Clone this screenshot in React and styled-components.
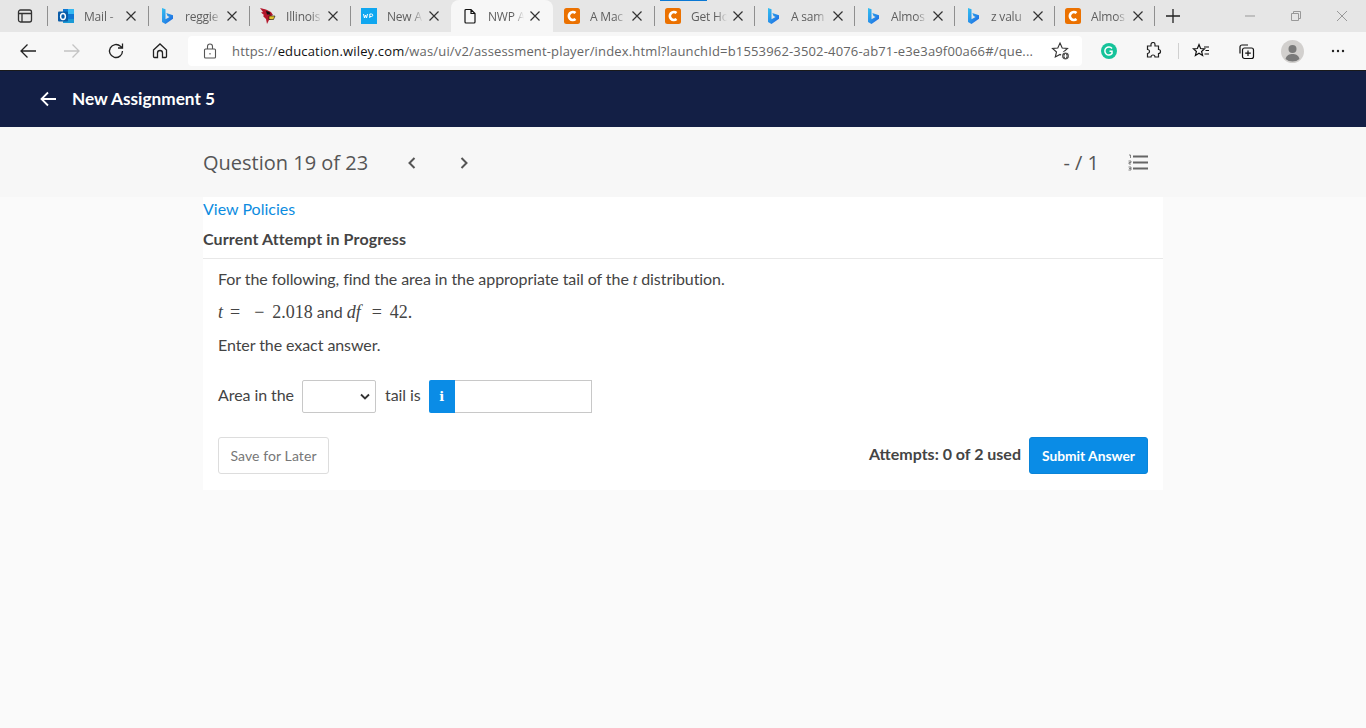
import styled, { createGlobalStyle } from "styled-components";

const Global = createGlobalStyle`
  * { box-sizing: border-box; }
  html, body { margin: 0; padding: 0; background: #fafafa; }
  body { font-family: "Lato", "Liberation Sans", sans-serif; color: #333; }
`;

const Page = styled.div`
  width: 1366px;
  height: 728px;
  overflow: hidden;
  display: flex;
  flex-direction: column;
  background: #fafafa;
`;

/* browser chrome */
const TabBar = styled.div`
  height: 32px;
  background: #e6e6e6;
  display: flex;
  align-items: stretch;
  flex-shrink: 0;
`;
const WindowBtn = styled.div`
  width: 47px;
  display: flex;
  align-items: center;
  justify-content: center;
  padding-left: 3px;
`;
const Tab = styled.div`
  position: relative;
  width: ${(p) => p.$w || 101}px;
  display: flex;
  align-items: center;
  padding-left: 11px;
  background: ${(p) => (p.$active ? "#f7f7f7" : "transparent")};
  border-radius: ${(p) => (p.$active ? "8px 8px 0 0" : "0")};
  &::before {
    content: "";
    display: ${(p) => (p.$bar ? "block" : "none")};
    position: absolute;
    left: 6px;
    top: 0;
    width: 47px;
    height: 1px;
    background: #0a78d4;
  }
  &::after {
    content: "";
    display: ${(p) => (p.$sep ? "block" : "none")};
    position: absolute;
    left: 0;
    top: 6px;
    width: 1px;
    height: 20px;
    background: #8f8f8f;
  }
`;
const TabIcon = styled.span`
  width: 16px;
  height: 16px;
  display: flex;
  flex-shrink: 0;
`;
const TabTitle = styled.span`
  margin-left: 10px;
  width: 36px;
  white-space: nowrap;
  font: 12px "Open Sans", "Liberation Sans", sans-serif;
  letter-spacing: -0.2px;
  color: #5f5f5f;
  -webkit-mask-image: linear-gradient(to right, #000 70%, transparent 100%);
  mask-image: linear-gradient(to right, #000 70%, transparent 100%);
`;
const TabClose = styled.svg`
  margin-left: 3px;
  flex-shrink: 0;
`;
const NewTab = styled.div`
  position: relative;
  width: 37px;
  display: flex;
  align-items: center;
  justify-content: center;
  &::after {
    content: "";
    position: absolute;
    left: 0;
    top: 6px;
    width: 1px;
    height: 20px;
    background: #8f8f8f;
  }
`;
const WindowControls = styled.div`
  margin-left: auto;
  display: flex;
  align-items: center;
  padding-right: 1px;
`;
const WinCtl = styled.div`
  width: 46px;
  height: 30px;
  display: flex;
  align-items: center;
  justify-content: center;
`;

const Toolbar = styled.div`
  height: 39px;
  background: #f7f7f7;
  border-bottom: 1px solid #1a1a1a;
  display: flex;
  align-items: center;
  flex-shrink: 0;
`;
const NavBtn = styled.div`
  width: ${(p) => p.$w || 44}px;
  padding-left: ${(p) => p.$pl || 0}px;
  display: flex;
  align-items: center;
  justify-content: center;
  flex-shrink: 0;
`;
const UrlBox = styled.div`
  width: 894px;
  height: 30px;
  margin-left: 6px;
  background: #fff;
  border-radius: 4px;
  display: flex;
  align-items: center;
  padding-left: 15px;
  flex-shrink: 0;
`;
const Url = styled.span`
  margin-left: 15px;
  width: 806px;
  white-space: nowrap;
  font: 13px "Open Sans", "Liberation Sans", sans-serif;
  letter-spacing: 0.16px;
  color: #666;
  b { font-weight: 400; color: #111; }
`;
const StarSlot = styled.span`
  margin-left: 13px;
  display: flex;
`;
const ToolDivider = styled.span`
  width: 1px;
  height: 16px;
  background: #d0d0d0;
  flex-shrink: 0;
`;

/* assignment header */
const Header = styled.div`
  height: 56px;
  background: #131f45;
  display: flex;
  align-items: center;
  padding-left: 40px;
  padding-bottom: 1px;
  gap: 16px;
  flex-shrink: 0;
`;
const HeaderTitle = styled.h1`
  margin: 0;
  font-size: 17.2px;
  font-weight: 700;
  color: #fff;
`;

const QuestionBar = styled.div`
  height: 70px;
  background: #f7f7f7;
  padding: 0 203px;
  display: flex;
  align-items: center;
  flex-shrink: 0;
`;
const QuestionTitle = styled.div`
  width: 165px;
  font: 20px "Open Sans", "Liberation Sans", sans-serif;
  color: #555;
  white-space: nowrap;
`;
const Chevrons = styled.div`
  margin-left: 39px;
  padding-top: 2px;
  display: flex;
  gap: 42px;
`;
const Score = styled.div`
  margin-left: auto;
  font: 20px "Open Sans", "Liberation Sans", sans-serif;
  color: #555;
`;
const ListBtn = styled.div`
  margin-left: 29px;
  margin-right: 15px;
  display: flex;
`;

const Card = styled.main`
  width: 960px;
  height: 293px;
  margin-left: 203px;
  background: #fff;
  display: flex;
  flex-direction: column;
`;
const PolicyLink = styled.a`
  margin-top: 2px;
  font-size: 16px;
  line-height: 19px;
  color: #0d8ce0;
`;
const AttemptLabel = styled.div`
  margin-top: 11px;
  padding-bottom: 10px;
  font-size: 16px;
  letter-spacing: 0.13px;
  line-height: 19px;
  font-weight: 700;
  color: #444;
  border-bottom: 1px solid #e8e8e8;
`;
const Body = styled.div`
  padding: 10px 15px 0;
  display: flex;
  flex-direction: column;
  font-size: 16px;
  color: #444;
`;
const Para = styled.p`
  margin: 0 0 ${(p) => p.$gap || 0}px;
  line-height: 19px;
  letter-spacing: -0.07px;
  i { font-family: "Liberation Serif", serif; }
`;
const MathLine = styled.p`
  margin: 0 0 13px;
  line-height: 19px;
  font-size: 16px;
  white-space: nowrap;
  display: flex;
  align-items: baseline;
`;
const MathText = styled.span`
  font-family: "Liberation Serif", serif;
  font-size: 18px;
  margin-left: ${(p) => p.$ml || 0}px;
  font-style: ${(p) => (p.$it ? "italic" : "normal")};
`;
const AndWord = styled.span`
  margin: 0 4px;
`;
const AnswerRow = styled.div`
  margin-top: 26px;
  height: 33px;
  display: flex;
  align-items: center;
`;
const AnswerLabel = styled.span`
  padding-bottom: 5px;
  letter-spacing: -0.07px;
`;
const FakeSelect = styled.div`
  width: 74px;
  height: 33px;
  margin: 0 9px 0 8px;
  background: #fff;
  border: 1px solid #c8c8c8;
  border-radius: 2px;
  display: flex;
  align-items: center;
  justify-content: flex-end;
  padding-right: 5px;
`;
const InfoBtn = styled.div`
  width: 26px;
  height: 33px;
  margin-left: 8px;
  background: #0a8ce6;
  border-radius: 2px 0 0 2px;
  color: #fff;
  font: 700 13px "DejaVu Serif", serif;
  display: flex;
  align-items: center;
  justify-content: center;
`;
const AnswerInput = styled.div`
  width: 137px;
  height: 33px;
  background: #fff;
  border: 1px solid #c8c8c8;
  border-left: none;
`;
const Actions = styled.div`
  margin-top: 24px;
  display: flex;
  align-items: flex-start;
`;
const SaveBtn = styled.button`
  width: 111px;
  height: 37px;
  background: #fff;
  border: 1px solid #ddd;
  border-radius: 3px;
  font: 14px "Lato", sans-serif;
  letter-spacing: 0.1px;
  color: #777;
`;
const Attempts = styled.div`
  margin-left: auto;
  margin-right: 8px;
  margin-top: 7px;
  font-size: 16px;
  font-weight: 700;
  line-height: 20px;
  color: #444;
`;
const SubmitBtn = styled.button`
  width: 119px;
  height: 37px;
  background: #0a8ce6;
  border: 1px solid #0a84d8;
  border-radius: 3px;
  font: 700 13.8px "Lato", sans-serif;
  color: #fff;
`;

const Close = () => (
  <TabClose width="16" height="16" viewBox="0 0 16 16" fill="none" stroke="#333" strokeWidth="1.2">
    <path d="M3.5 3.5l9 9M12.5 3.5l-9 9" />
  </TabClose>
);

const Outlook = () => (
  <svg width="16" height="16" viewBox="0 0 16 16">
    <rect x="5" y="1" width="11" height="14" fill="#1a9ad6" />
    <rect x="10" y="1" width="6" height="5" fill="#35b8f1" />
    <rect x="5" y="1" width="5" height="5" fill="#0f78d4" />
    <rect x="10" y="6" width="6" height="5" fill="#0f78d4" />
    <rect x="0" y="3.5" width="10" height="10" rx="1" fill="#0a5ca8" />
    <ellipse cx="5" cy="8.5" rx="2.4" ry="3" fill="none" stroke="#fff" strokeWidth="1.4" />
  </svg>
);

const Bing = () => (
  <svg width="16" height="16" viewBox="0 0 16 16">
    <defs>
      <linearGradient id="bingGrad" x1="0" y1="0" x2="1" y2="1">
        <stop offset="0" stopColor="#35c1f1" />
        <stop offset="1" stopColor="#1b62e0" />
      </linearGradient>
    </defs>
    <path d="M3 0l3.500 1.200v10l4-2.300-2-1-1.200-3 6.700 2.300v3.600L6.500 16 3 14z" fill="url(#bingGrad)" />
  </svg>
);

const Cardinal = () => (
  <svg width="16" height="16" viewBox="0 0 16 16">
    <path d="M0 0l6 1.500 5 2.500 2 3-2 1 1 3-3 1-2 4-1-5-3-3 1-1-3-2.500 2-.5z" fill="#b3162b" />
    <path d="M6 3l3.500 1 1 2.500-3.500 0z" fill="#111" />
    <path d="M9 8l6 0-1.500 3.500-4.500 0z" fill="#e3c22b" stroke="#111" strokeWidth=".6" />
  </svg>
);

const Wp = () => (
  <svg width="16" height="16" viewBox="0 0 16 16">
    <rect width="16" height="16" fill="#10a7f0" />
    <path d="M2.500 6l1 4 1-3 1 3 1-4M8.800 10V6h1.700a1.200 1.200 0 010 2.500H8.800" fill="none" stroke="#fff" strokeWidth="1" />
  </svg>
);

const Doc = () => (
  <svg width="16" height="16" viewBox="0 0 16 16" fill="none" stroke="#111" strokeWidth="1.2">
    <path d="M3 2.500a1 1 0 011-1h5l4 4v8.500a1 1 0 01-1 1H4a1 1 0 01-1-1zM9 1.500v4h4" />
  </svg>
);

const Chegg = () => (
  <svg width="16" height="16" viewBox="0 0 16 16">
    <rect width="16" height="16" rx="2.500" fill="#eb7100" />
    <path d="M11.500 5a4 4 0 100 6" fill="none" stroke="#fff" strokeWidth="2.600" />
  </svg>
);

const tabs = [
  { icon: <Outlook />, title: "Mail -", sep: true },
  { icon: <Bing />, title: "reggie", sep: true },
  { icon: <Cardinal />, title: "Illinois", sep: true },
  { icon: <Wp />, title: "New A", sep: true },
  { icon: <Doc />, title: "NWP A", active: true, w: 102 },
  { icon: <Chegg />, title: "A Mac", w: 101 },
  { icon: <Chegg />, title: "Get Ho", sep: true, w: 100, bar: true },
  { icon: <Bing />, title: "A sam", sep: true, w: 100 },
  { icon: <Bing />, title: "Almos", sep: true, w: 100 },
  { icon: <Bing />, title: "z valu", sep: true, w: 100 },
  { icon: <Chegg />, title: "Almos", sep: true, w: 100 },
];

const Stroke = ({ w = 20, h = 20, vb, color = "#222", sw = 1.400, children }) => (
  <svg width={w} height={h} viewBox={vb || `0 0 ${w} ${h}`} fill="none" stroke={color} strokeWidth={sw}>
    {children}
  </svg>
);

export default function App() {
  return (
    <Page>
      <Global />
      <TabBar>
        <WindowBtn>
          <Stroke w={16} h={16} sw={1.300} color="#333">
            <rect x="1.500" y="2" width="13" height="12" rx="2" />
            <path d="M1.500 5.500h13M5 5.500V14" />
          </Stroke>
        </WindowBtn>
        {tabs.map((t, i) => (
          <Tab key={i} $sep={t.sep} $active={t.active} $w={t.w} $bar={t.bar}>
            <TabIcon>{t.icon}</TabIcon>
            <TabTitle>{t.title}</TabTitle>
            <Close />
          </Tab>
        ))}
        <NewTab>
          <Stroke w={16} h={16} sw={1.300} color="#222">
            <path d="M8 1v14M1 8h14" />
          </Stroke>
        </NewTab>
        <WindowControls>
          <WinCtl>
            <Stroke w={12} h={12} sw={1} color="#999"><path d="M1 6h10" /></Stroke>
          </WinCtl>
          <WinCtl>
            <Stroke w={12} h={12} sw={1} color="#999">
              <path d="M1.500 3.500h7v7h-7zM3.500 3.500v-2h7v7h-2" />
            </Stroke>
          </WinCtl>
          <WinCtl>
            <Stroke w={12} h={12} sw={1} color="#999"><path d="M1 1l10 10M11 1L1 11" /></Stroke>
          </WinCtl>
        </WindowControls>
      </TabBar>

      <Toolbar>
        <NavBtn $w={50} $pl={6}>
          <Stroke sw={1.300}><path d="M18 10H3M9.500 3.500L3 10l6.500 6.500" /></Stroke>
        </NavBtn>
        <NavBtn>
          <Stroke color="#c4c4c4" sw={1.300}><path d="M2 10h15M10.500 3.500L17 10l-6.500 6.500" /></Stroke>
        </NavBtn>
        <NavBtn>
          <Stroke sw={1.300}><path d="M16.500 10a6.500 6.500 0 11-2-4.700L16.500 7M16.500 2.500V7H12" /></Stroke>
        </NavBtn>
        <NavBtn>
          <Stroke sw={1.300}>
            <path d="M3.500 9L10 3l6.500 6v6.500a1 1 0 01-1 1h-3V12a2.500 2.500 0 00-5 0v4.500h-3a1 1 0 01-1-1z" />
          </Stroke>
        </NavBtn>
        <UrlBox>
          <Stroke w={14} h={16} sw={1.100} color="#555">
            <rect x="1.500" y="6" width="11" height="9" rx="1" />
            <path d="M4.500 6V3.500a2.500 2.500 0 015 0V6M7 10v1.500" />
          </Stroke>
          <Url>
            https://<b>education.wiley.com</b>/was/ui/v2/assessment-player/index.html?launchId=b1553962-3502-4076-ab71-e3e3a9f00a66#/que...
          </Url>
          <StarSlot>
            <svg width="20" height="20" viewBox="0 0 20 20" fill="none" stroke="#333" strokeWidth="1.100">
              <path d="M9 2l2.200 5 5.300.5-4 3.500 1.200 5L9 13.400 4.300 16l1.200-5-4-3.500L6.800 7z" />
              <circle cx="14.500" cy="15" r="4" fill="#555" stroke="#fff" />
              <path d="M14.500 13v4M12.500 15h4" stroke="#fff" strokeWidth="1" />
            </svg>
          </StarSlot>
        </UrlBox>
        <NavBtn $w={54}>
          <svg width="16" height="16" viewBox="0 0 16 16">
            <circle cx="8" cy="8" r="8" fill="#15c39a" />
            <path d="M11 5.500a4 4 0 100 5V8.300H8.500" fill="none" stroke="#fff" strokeWidth="1.500" />
          </svg>
        </NavBtn>
        <NavBtn $w={34}>
          <Stroke w={18} h={18} sw={1.200}>
            <path d="M7 2.500a2 2 0 014 0V4h3.500v3.500a2 2 0 010 4V15H11a2 2 0 00-4 0H3.500v-3.500a2 2 0 000-4V4H7z" />
          </Stroke>
        </NavBtn>
        <NavBtn $w={16}><ToolDivider /></NavBtn>
        <NavBtn $w={30}>
          <Stroke w={18} h={18} sw={1.200} color="#111">
            <path d="M7 2.500l1.600 4 4 .3-3 2.700 1 4L7 11.300 3.400 13.500l1-4-3-2.700 4-.3zM12 5h5M13.500 8.500H17M12.500 12H17" />
          </Stroke>
        </NavBtn>
        <NavBtn $w={60}>
          <Stroke w={18} h={18} sw={1.200} color="#111">
            <path d="M3 11.500V5a2 2 0 012-2h6" />
            <rect x="5.500" y="6" width="11" height="10.500" rx="2" />
            <path d="M11 8.500v5.500M8.200 11.200h5.600" />
          </Stroke>
        </NavBtn>
        <NavBtn $w={32}>
          <svg width="23" height="23" viewBox="0 0 23 23">
            <circle cx="11.500" cy="11.500" r="11.500" fill="#d2d0ce" />
            <circle cx="11.500" cy="9" r="4" fill="#7a7a7a" />
            <path d="M4.500 19c1-4 4-5 7-5s6 1 7 5a11 11 0 01-14 0z" fill="#7a7a7a" />
          </svg>
        </NavBtn>
        <NavBtn $w={60}>
          <svg width="14" height="4" viewBox="0 0 14 4" fill="#222">
            <circle cx="2" cy="2" r="1.200" />
            <circle cx="7" cy="2" r="1.200" />
            <circle cx="12" cy="2" r="1.200" />
          </svg>
        </NavBtn>
      </Toolbar>

      <Header>
        <Stroke w={16} h={16} color="#fff" sw={1.800}>
          <path d="M16 8H1.500M8 1.500L1.500 8 8 14.500" />
        </Stroke>
        <HeaderTitle>New Assignment 5</HeaderTitle>
      </Header>

      <QuestionBar>
        <QuestionTitle>Question 19 of 23</QuestionTitle>
        <Chevrons>
          <Stroke w={10} h={14} color="#555" sw={2}><path d="M7.500 2L2.500 7l5 5" /></Stroke>
          <Stroke w={10} h={14} color="#555" sw={2}><path d="M2.500 2l5 5-5 5" /></Stroke>
        </Chevrons>
        <Score>- / 1</Score>
        <ListBtn>
          <svg width="20" height="17" viewBox="0 0 20 17">
            <path d="M5 2.500h15M5 8.500h15M5 14.500h15" stroke="#666" strokeWidth="2" />
            <path d="M1 1h1.500v3M0.500 7h2.500v1.500H1V10h2M0.500 13h2.500v3H.5M1 14.500h2" stroke="#666" strokeWidth=".8" fill="none" />
          </svg>
        </ListBtn>
      </QuestionBar>

      <Card>
        <PolicyLink>View Policies</PolicyLink>
        <AttemptLabel>Current Attempt in Progress</AttemptLabel>
        <Body>
          <Para $gap={13}>
            For the following, find the area in the appropriate tail of the <i>t</i> distribution.
          </Para>
          <MathLine>
            <MathText $it>t</MathText>
            <MathText $ml={7}>=</MathText>
            <MathText $ml={14}>−</MathText>
            <MathText $ml={8}>2.018</MathText>
            <AndWord>and</AndWord>
            <MathText $it>df</MathText>
            <MathText $ml={11}>=</MathText>
            <MathText $ml={8}>42.</MathText>
          </MathLine>
          <Para>Enter the exact answer.</Para>
          <AnswerRow>
            <AnswerLabel>Area in the</AnswerLabel>
            <FakeSelect>
              <Stroke w={10} h={8} sw={1.800} color="#333"><path d="M1 1.500l4 4 4-4" /></Stroke>
            </FakeSelect>
            <AnswerLabel>tail is</AnswerLabel>
            <InfoBtn>i</InfoBtn>
            <AnswerInput />
          </AnswerRow>
          <Actions>
            <SaveBtn>Save for Later</SaveBtn>
            <Attempts>Attempts: 0 of 2 used</Attempts>
            <SubmitBtn>Submit Answer</SubmitBtn>
          </Actions>
        </Body>
      </Card>
    </Page>
  );
}
